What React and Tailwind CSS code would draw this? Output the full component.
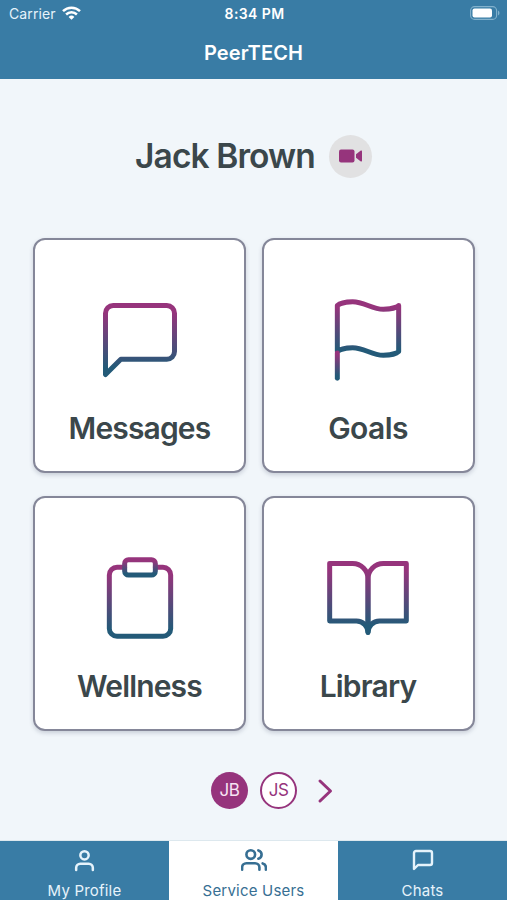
import React from "react";

const PURPLE = "#96347c";
const TEAL = "#235a78";

function Gradient({ id, y1, y2 }) {
  return (
    <linearGradient id={id} gradientUnits="userSpaceOnUse" x1="0" y1={y1} x2="0" y2={y2}>
      <stop offset="0.1" stopColor={PURPLE} />
      <stop offset="0.9" stopColor={TEAL} />
    </linearGradient>
  );
}

function CardIcon({ children }) {
  return (
    <svg
      className="block size-[92px] shrink-0"
      viewBox="0 0 24 24"
      fill="none"
      strokeWidth="1.3"
      strokeLinecap="round"
      strokeLinejoin="round"
    >
      {children}
    </svg>
  );
}

function MessageIcon() {
  return (
    <CardIcon>
      <defs><Gradient id="msg" y1="3" y2="21" /></defs>
      <path stroke="url(#msg)" d="M21 15a2 2 0 0 1-2 2H7l-4 4V5a2 2 0 0 1 2-2h14a2 2 0 0 1 2 2z" />
    </CardIcon>
  );
}

function FlagIcon() {
  return (
    <CardIcon>
      <defs>
        <Gradient id="flag" y1="2" y2="16" />
        <Gradient id="pole" y1="15" y2="22" />
      </defs>
      <path stroke="url(#flag)" d="M4 15s1-1 4-1 5 2 8 2 4-1 4-1V3s-1 1-4 1-5-2-8-2-4 1-4 1z" />
      <path stroke="url(#pole)" d="M4 22V15.400" />
    </CardIcon>
  );
}

function ClipboardIcon() {
  return (
    <CardIcon>
      <defs>
        <Gradient id="board" y1="4" y2="22" />
        <Gradient id="clip" y1="2" y2="6" />
      </defs>
      <path stroke="url(#board)" d="M16 4h2a2 2 0 0 1 2 2v14a2 2 0 0 1-2 2H6a2 2 0 0 1-2-2V6a2 2 0 0 1 2-2h2" />
      <rect stroke="url(#clip)" x="8" y="2" width="8" height="4" rx="1" />
    </CardIcon>
  );
}

function BookIcon() {
  return (
    <CardIcon>
      <defs><Gradient id="book" y1="3" y2="21" /></defs>
      <path stroke="url(#book)" d="M2 3h6a4 4 0 0 1 4 4v14a3 3 0 0 0-3-3H2z" />
      <path stroke="url(#book)" d="M22 3h-6a4 4 0 0 0-4 4v14a3 3 0 0 1 3-3h7z" />
    </CardIcon>
  );
}

function Card({ icon, label, tracking }) {
  return (
    <button className="flex h-[235px] flex-col items-center rounded-xl border-2 border-[#858799] bg-white pt-[54px] shadow-[0_2px_4px_rgba(60,70,100,0.22)]">
      {icon}
      <span className={"mt-[22px] text-[30px] leading-10 font-[560] whitespace-nowrap text-[#3b474b] " + tracking}>{label}</span>
    </button>
  );
}

function TabIcon({ size, children }) {
  return (
    <svg className={"block " + size} viewBox="0 0 24 24" fill="none" stroke="currentColor" strokeWidth="2.4" strokeLinecap="round" strokeLinejoin="round">
      {children}
    </svg>
  );
}

function Tab({ icon, label, active }) {
  return (
    <button className={"flex flex-col items-center pt-[5px] " + (active ? "bg-white text-[#376f93]" : "bg-[#397ca5] text-[#e6f3fb]")}>
      <span className="flex h-[28px] items-center">{icon}</span>
      <span className="mt-[7px] text-[15px] leading-5 tracking-[0.2px] whitespace-nowrap">{label}</span>
    </button>
  );
}

export default function App() {
  return (
    <div className="flex h-[900px] w-[507px] flex-col overflow-hidden bg-[#f1f6fa] font-['Inter','Liberation_Sans',sans-serif]">
      <header className="h-[79px] shrink-0 bg-[#397ca5] text-white">
        <div className="grid h-[27px] grid-cols-3 items-center pr-[7px] pl-[9px]">
          <div className="flex items-center gap-[6px]">
            <span className="text-[14px] leading-5 tracking-[0.1px] text-[#e6f3fb]">Carrier</span>
            <svg className="-mt-px h-[14px] w-[19px]" viewBox="0 0 19 14" fill="none" stroke="white" strokeWidth="2.5">
              <path d="M1 5.2a12.2 12.2 0 0 1 17 0" />
              <path d="M4.1 8.5a7.7 7.7 0 0 1 10.8 0" />
              <path d="M9.5 13.8 6.6 10.9a4.1 4.1 0 0 1 5.8 0z" fill="white" stroke="none" />
            </svg>
          </div>
          <span className="text-center text-[14px] leading-5 font-semibold tracking-[0.4px] whitespace-nowrap">8:34 PM</span>
          <svg className="-mt-px h-[14px] w-[30px] justify-self-end" viewBox="0 0 30 14" fill="none">
            <rect x="0.6" y="0.6" width="26" height="12.8" rx="4" stroke="#83b2cd" strokeWidth="1.1" />
            <rect x="2.5" y="2.5" width="19.5" height="9" rx="2" fill="white" />
            <path d="M28 4.5c2 1 2 4 0 5z" fill="#83b2cd" />
          </svg>
        </div>
        <h1 className="mt-[12px] text-center text-[20px] leading-7 font-[560] tracking-[0.1px]">PeerTECH</h1>
      </header>

      <main className="flex grow flex-col px-8">
        <div className="mt-[55px] flex h-[44px] items-center justify-center gap-[14px]">
          <h2 className="text-[33.500px] leading-[44px] font-[560] tracking-[-0.9px] whitespace-nowrap text-[#3b474b]">Jack Brown</h2>
          <button className="flex size-[43px] items-center justify-center rounded-full bg-[#e1e1e2]">
            <svg className="h-[14px] w-[23px]" viewBox="0 0 23 14" fill="#96347c">
              <rect y="0.5" width="15.5" height="13" rx="2" />
              <path d="M17 5.2 21.8 1.6Q23 1 23 2.2v9.6q0 1.200-1.200.6L17 8.800z" />
            </svg>
          </button>
        </div>

        <div className="mt-[60px] ml-[1px] grid grid-cols-[213px_213px] gap-x-[15.5px] gap-y-[23px]">
          <Card icon={<MessageIcon />} label="Messages" tracking="tracking-[-0.85px]" />
          <Card icon={<FlagIcon />} label="Goals" tracking="tracking-[-0.6px]" />
          <Card icon={<ClipboardIcon />} label="Wellness" tracking="tracking-[-0.85px]" />
          <Card icon={<BookIcon />} label="Library" tracking="tracking-[-0.85px]" />
        </div>

        <div className="mt-[41px] ml-[179px] flex items-center">
          <span className="flex size-[37px] items-center justify-center rounded-full bg-[#96347c] pt-px text-[17px] tracking-[-0.5px] text-[#f6e4f2]">JB</span>
          <span className="ml-[12px] flex size-[37px] items-center justify-center rounded-full border-[2.5px] border-[#96347c] bg-white pt-px text-[17px] tracking-[-0.5px] text-[#96347c]">JS</span>
          <svg className="ml-[20px] h-[26px] w-[16px]" viewBox="0 0 16 26" fill="none" stroke="#96347c" strokeWidth="3" strokeLinecap="round" strokeLinejoin="round">
            <path d="m3 3 10.500 10L3 23" />
          </svg>
        </div>
      </main>

      <nav className="grid h-[60px] shrink-0 grid-cols-3 border-t border-[#dde8ee]">
        <Tab
          label="My Profile"
          icon={<TabIcon size="size-[25px]"><path d="M20 21v-2a4 4 0 0 0-4-4H8a4 4 0 0 0-4 4v2" /><circle cx="12" cy="7" r="4" /></TabIcon>}
        />
        <Tab
          active
          label="Service Users"
          icon={<TabIcon size="size-[26px]"><path d="M17 21v-2a4 4 0 0 0-4-4H5a4 4 0 0 0-4 4v2" /><circle cx="9" cy="7" r="4" /><path d="M23 21v-2a4 4 0 0 0-3-3.870" /><path d="M16 3.130a4 4 0 0 1 0 7.750" /></TabIcon>}
        />
        <Tab
          label="Chats"
          icon={<TabIcon size="size-[24px]"><path d="M21 15a2 2 0 0 1-2 2H7l-4 4V5a2 2 0 0 1 2-2h14a2 2 0 0 1 2 2z" /></TabIcon>}
        />
      </nav>
    </div>
  );
}
